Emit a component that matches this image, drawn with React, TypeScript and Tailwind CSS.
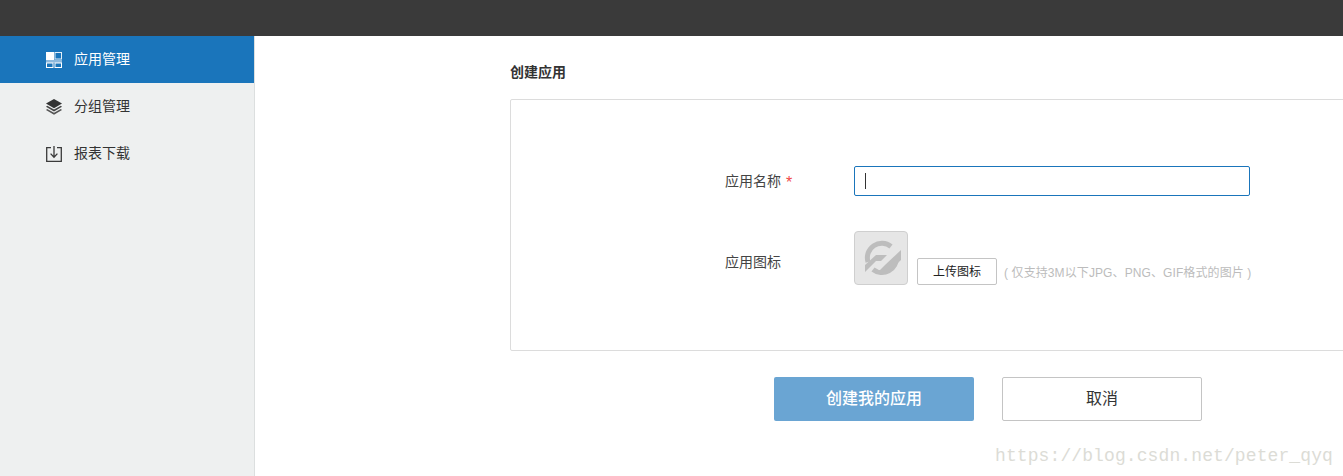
const cjk = "font-['Liberation_Sans','Noto_Sans_CJK_SC',sans-serif]";

function GridIcon() {
  return (
    <svg width="16" height="16" viewBox="0 0 16 16" className="shrink-0">
      <rect x="0" y="0" width="8" height="8" fill="#fff" />
      <rect x="9" y="0.5" width="6.5" height="6.5" fill="#1a75bb" stroke="#e4eff7" />
      <rect x="0" y="8" width="8" height="3" fill="#8db9dd" />
      <rect x="0.5" y="11" width="6.5" height="4.5" fill="#1a75bb" stroke="#fff" />
      <rect x="8" y="7.5" width="8" height="3.5" fill="#8db9dd" />
      <rect x="9" y="11" width="6.5" height="4.5" fill="#1a75bb" stroke="#fff" />
    </svg>
  );
}

function LayersIcon() {
  return (
    <svg width="16" height="16" viewBox="0 0 16 16" className="shrink-0">
      <path d="M8 0 L16 4.6 L8 9.2 L0 4.6 Z" fill="#333" />
      <path d="M1.2 6.8 L8 10.6 L14.8 6.8 L16 7.8 L8 12.4 L0 7.8 Z" fill="#444" />
      <path d="M1.2 10 L8 13.8 L14.8 10 L16 11 L8 15.8 L0 11 Z" fill="#555" />
    </svg>
  );
}

function DownloadIcon() {
  return (
    <svg width="16" height="16" viewBox="0 0 16 16" fill="none" stroke="#3a3a3a" strokeWidth="1.3" className="shrink-0">
      <path d="M5 1.7 H0.7 V15.3 H15.3 V1.7 H11" />
      <path d="M8 0 V11 M4.6 7.6 L8 11.2 L11.4 7.6" />
    </svg>
  );
}

function BrokenImage() {
  return (
    <svg width="46" height="44" viewBox="0 0 46 44">
      <g fill="none" stroke="#bdbdbd" strokeWidth="5">
        <path d="M10 26 A14.5 14.5 0 0 1 33 10.5" />
        <path d="M38.4 21 A14.5 14.5 0 0 1 15 33.5" />
      </g>
      <path d="M7 36 L7 29 L18 19 L29 19 L23 25 L18 25 Z" fill="#bdbdbd" />
      <path d="M43 14 L43 24 L30 36 L20 36 L27 29 Z" fill="#bdbdbd" />
    </svg>
  );
}

const menu = [
  { label: "应用管理", icon: <GridIcon />, active: true },
  { label: "分组管理", icon: <LayersIcon />, active: false },
  { label: "报表下载", icon: <DownloadIcon />, active: false },
];

export default function App() {
  return (
    <div className={`${cjk} relative flex h-[476px] w-[1343px] flex-col overflow-hidden bg-white text-[#333]`}>
      <header className="h-9 shrink-0 bg-[#3a3a3a]" />

      <div className="flex min-h-0 flex-1">
        {/* Sidebar */}
        <aside className="w-[255px] shrink-0 border-r border-[#dcdfdf] bg-[#eef0f0]">
          {menu.map((m) => (
            <div
              key={m.label}
              className={`flex h-[47px] items-center gap-[12px] pl-[46px] text-[14px] ${
                m.active ? "bg-[#1a75bb] text-white" : "text-[#333]"
              }`}
            >
              {m.icon}
              <span>{m.label}</span>
            </div>
          ))}
        </aside>

        {/* Create form */}
        <main className="ml-[255px] w-[900px] shrink-0">
          <h2 className="mt-[26px] h-[20px] text-[14px] leading-[20px] font-semibold text-[#333]">创建应用</h2>
          <section className="mt-[17px] h-[252px] rounded-[2px] border border-[#dcdcdc] pt-[66px] pl-[214px]">
            <div className="flex h-[30px] items-center">
              <label className="flex w-[129px] shrink-0 items-center text-[14px] text-[#444]">
                应用名称<span className="mt-[4px] ml-[5px] text-[16px] text-[#f04848]">*</span>
              </label>
              <div className="flex h-[30px] w-[396px] items-center rounded-[2px] border border-[#1a75bb] pl-[10px]">
                <span className="h-[16px] w-px bg-[#333]" />
              </div>
            </div>

            <div className="mt-[35px] flex h-[54px]">
              <label className="mt-[21px] w-[129px] shrink-0 text-[14px] leading-[20px] text-[#444]">应用图标</label>
              <div className="flex h-[54px] w-[54px] shrink-0 items-center justify-center rounded-[4px] border border-[#cfcfcf] bg-[#e6e6e6]">
                <BrokenImage />
              </div>
              <button className="mt-[27px] ml-[9px] h-[27px] w-[80px] shrink-0 rounded-[2px] border border-[#c4c4c4] bg-white text-[12px] text-[#222]">
                上传图标
              </button>
              <span className="mt-[33px] ml-[7px] text-[12px] leading-[18px] tracking-[0.1px] whitespace-nowrap text-[#bcbcbc]">
                ( 仅支持3M以下JPG、PNG、GIF格式的图片 )
              </span>
            </div>
          </section>

          <div className="mt-[26px] ml-[264px] flex gap-[28px]">
            <button className="h-[44px] w-[200px] rounded-[2px] bg-[#6aa5d3] text-[16px] font-medium text-white">
              创建我的应用
            </button>
            <button className="h-[44px] w-[200px] rounded-[2px] border border-[#c4c4c4] bg-white text-[16px] text-[#333]">
              取消
            </button>
          </div>
        </main>
      </div>

      {/* CSDN watermark */}
      <div className="absolute top-[445px] left-[995px] font-['Liberation_Mono',monospace] text-[18px] leading-[22px] tracking-[0.1px] whitespace-nowrap text-[#dcdcd6]">
        https://blog.csdn.net/peter_qyq
      </div>
    </div>
  );
}
